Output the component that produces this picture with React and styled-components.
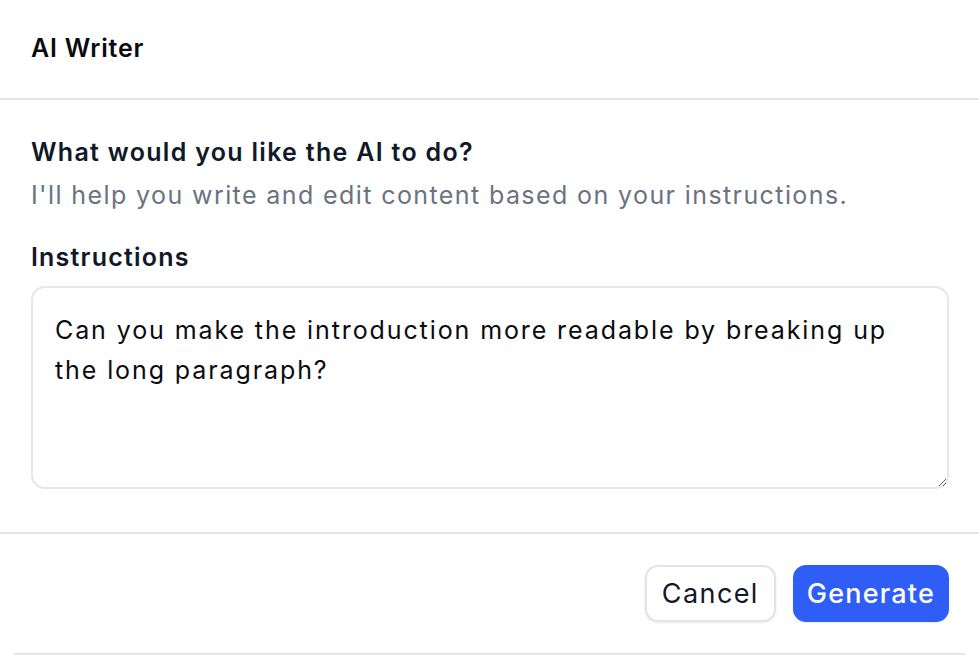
import React from 'react';
import styled, { createGlobalStyle } from 'styled-components';

const GlobalStyle = createGlobalStyle`
  body {
    margin: 0;
    background: #ffffff;
    font-family: 'Inter', 'Noto Sans', sans-serif;
  }
  * {
    box-sizing: border-box;
  }
`;

const Dialog = styled.div`
  width: 979px;
  height: 655px;
  background: #ffffff;
  display: flex;
  flex-direction: column;
  overflow: hidden;
`;

const Header = styled.div`
  height: 101px;
  padding: 0 31px;
  display: flex;
  align-items: center;
  border-bottom: 2px solid #e5e5ea;
`;

const Title = styled.h2`
  margin: 0 0 2px;
  font-size: 25px;
  font-weight: 600;
  color: #0b0b0f;
  letter-spacing: 0.8px;
`;

const Body = styled.div`
  padding: 34px 31px 0 31px;
  display: flex;
  flex-direction: column;
`;

const Question = styled.div`
  font-size: 25px;
  font-weight: 600;
  color: #111827;
  line-height: 36px;
  letter-spacing: 1.3px;
`;

const Hint = styled.div`
  font-size: 25px;
  color: #6b7280;
  line-height: 36px;
  margin-top: 7px;
  letter-spacing: 1.4px;
`;

const Label = styled.label`
  font-size: 25px;
  font-weight: 600;
  color: #111827;
  line-height: 36px;
  margin-top: 26px;
  letter-spacing: 1.2px;
`;

const TextArea = styled.textarea`
  margin-top: 11px;
  width: 918px;
  height: 203px;
  border: 2px solid #e5e7eb;
  border-radius: 14px;
  padding: 22px 24px 22px 22px;
  font-family: inherit;
  font-size: 25px;
  line-height: 40px;
  color: #0b0b0f;
  letter-spacing: 1.9px;
  resize: vertical;
  outline: none;
`;

const Footer = styled.div`
  margin-top: 43px;
  border-top: 2px solid #e5e5ea;
  padding: 31px 30px 0 31px;
  display: flex;
  justify-content: flex-end;
  gap: 17px;
`;

const Button = styled.button`
  height: 57px;
  padding: 0 ${(p) => (p.primary ? 12 : 15)}px;
  border-radius: 13px;
  font-family: inherit;
  font-size: 27px;
  font-weight: ${(p) => (p.primary ? 500 : 400)};
  letter-spacing: ${(p) => (p.primary ? 1.2 : 1.4)}px;
  border: 2px solid ${(p) => (p.primary ? '#2f5ef7' : '#e3e3ea')};
  background: ${(p) => (p.primary ? '#2f5ef7' : '#ffffff')};
  color: ${(p) => (p.primary ? '#ffffff' : '#111827')};
  box-shadow: 0 1px 3px rgba(17, 24, 39, 0.08);
  cursor: pointer;
`;

const BottomEdge = styled.div`
  margin: 31px 14px 0;
  border-top: 2px solid #e5e5ea;
`;

const App = () => {
  return (
    <Dialog>
      <GlobalStyle />
      <Header>
        <Title>AI Writer</Title>
      </Header>
      <Body>
        <Question>What would you like the AI to do?</Question>
        <Hint>I'll help you write and edit content based on your instructions.</Hint>
        <Label htmlFor="instructions">Instructions</Label>
        <TextArea
          id="instructions"
          defaultValue="Can you make the introduction more readable by breaking up the long paragraph?"
        />
      </Body>
      <Footer>
        <Button>Cancel</Button>
        <Button primary>Generate</Button>
      </Footer>
      <BottomEdge />
    </Dialog>
  );
};

export default App;
